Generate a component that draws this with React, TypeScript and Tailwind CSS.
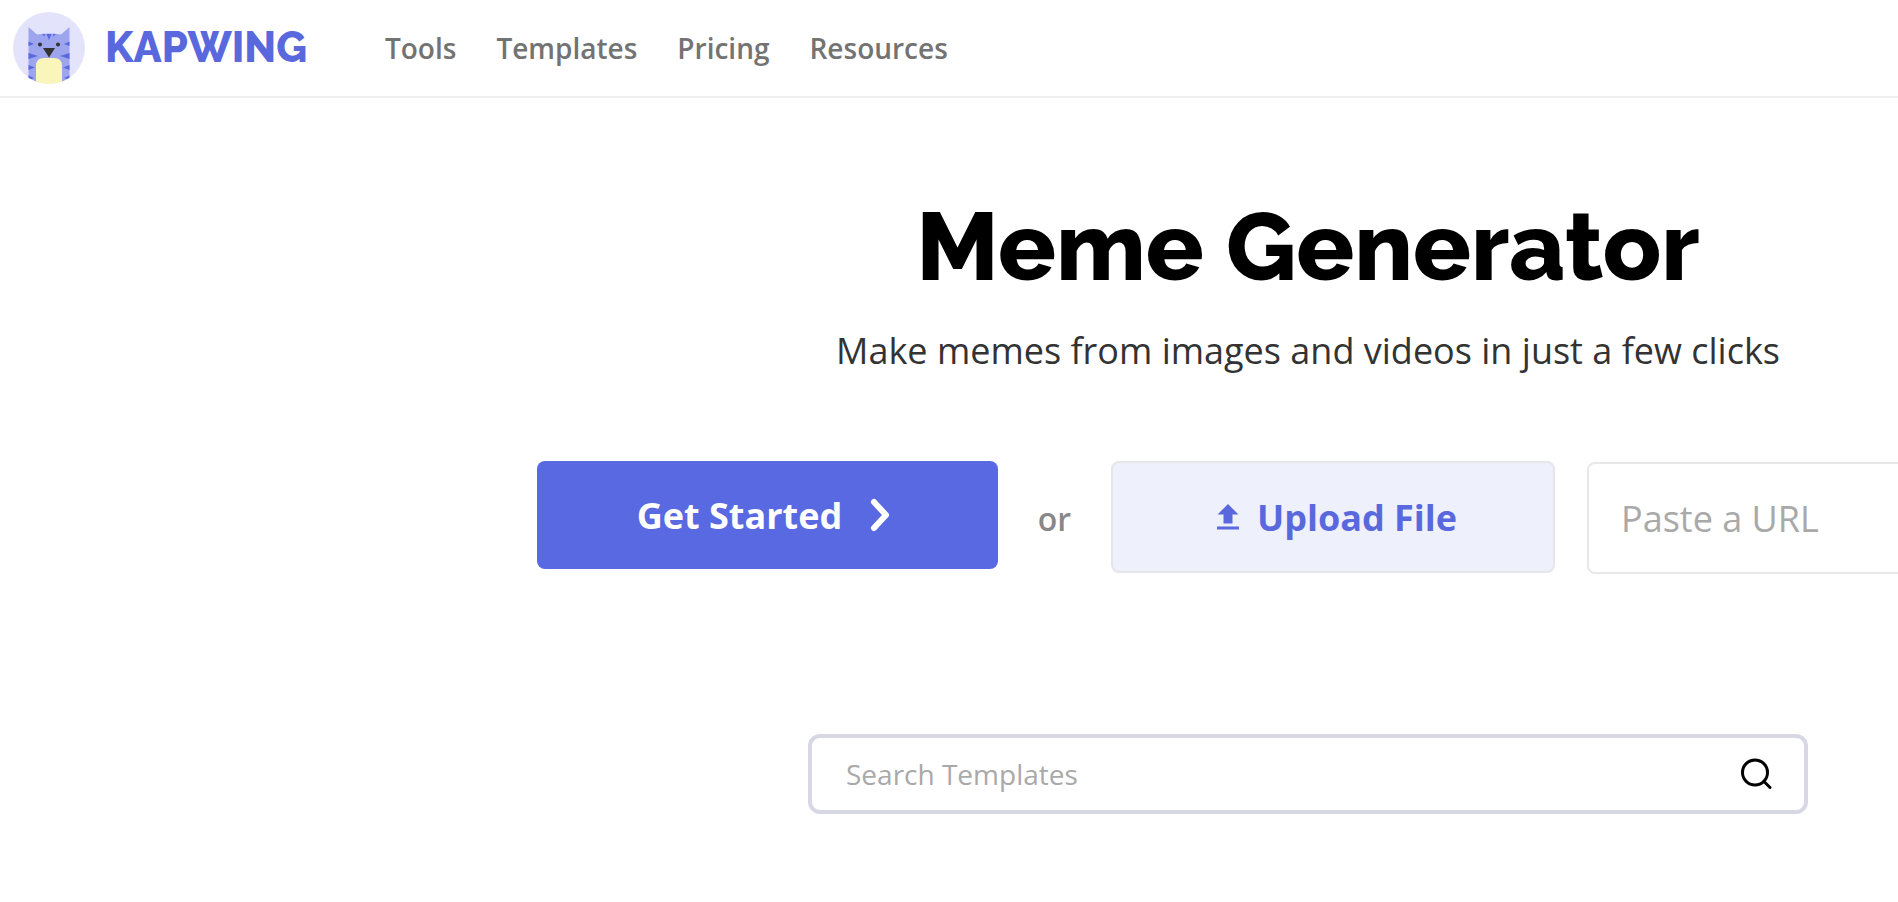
import { useState } from "react";

const navLinks = ["Tools", "Templates", "Pricing", "Resources"];

const CatLogo = () => {
  return (
    <svg className="w-[72px] h-[72px] shrink-0" viewBox="13 12 72 72" aria-hidden="true">
      <defs>
        <clipPath id="badge">
          <circle cx="49" cy="48" r="36" />
        </clipPath>
      </defs>
      <g clipPath="url(#badge)">
        <rect x="13" y="12" width="72" height="72" fill="#e3e4fb" />
        {/* body and ears */}
        <path d="M28.5 27 L37 34.5 Q49 32.5 61 34.5 L69.5 27 V81.5 H28.5 Z" fill="#9ca5ee" />
        {/* stripes */}
        <g fill="#5b69df">
          <path d="M46.5 34 H51.5 L49 40 Z" />
          <path d="M42 34 H45 L44.5 36.5 Z" />
          <path d="M53 34 H56 L53.5 36.5 Z" />
          <path d="M28.5 41.5 L34 44 L28.5 46 Z" />
          <path d="M69.5 41.5 L64 44 L69.5 46 Z" />
          <path d="M28.5 53 L38 56 L28.5 59 Z" />
          <path d="M69.5 53 L60 56 L69.5 59 Z" />
          <path d="M28.5 65 L35 67.5 L28.5 70 Z" />
          <path d="M69.5 65 L63 67.5 L69.5 70 Z" />
          <path d="M28.5 75.5 L34 78 L28.5 80 Z" />
          <path d="M69.5 75.5 L64 78 L69.5 80 Z" />
        </g>
        <path d="M36 84 V66 Q36 58 44 58 H54 Q62 58 62 66 V84 Z" fill="#f9f5bb" />
        <circle cx="40" cy="44.5" r="2" fill="#333" />
        <circle cx="58" cy="44.5" r="2" fill="#333" />
        <path d="M43 48 H55 L49 57.5 Z" fill="#333" />
      </g>
    </svg>
  );
};

const Header = () => {
  return (
    <header className="flex items-center h-[98px] pl-[13px] border-b-2 border-[#efefef]">
      <a href="#" className="flex items-center gap-5">
        <CatLogo />
        <span className="font-['Raleway','Lato',sans-serif] font-extrabold text-[42px] leading-[44px] text-[#5a68de]">KAPWING</span>
      </a>
      <nav className="flex items-center gap-10 ml-[78px]">
        {navLinks.map((link) => (
          <a key={link} href="#" className="text-[28px] font-semibold text-[#737373]">
            {link}
          </a>
        ))}
      </nav>
    </header>
  );
};

const App = () => {
  const [url, setUrl] = useState("");
  const [search, setSearch] = useState("");

  return (
    <div className="min-h-screen overflow-hidden bg-white font-['Open_Sans',sans-serif]">
      <Header />
      <main className="flex flex-col items-center min-w-[2616px] pt-[88px]">
        <h1 className="font-['Raleway','Lato',sans-serif] text-[96px] leading-[120px] font-extrabold text-black">Meme Generator</h1>
        <p className="mt-5 text-4xl leading-[50px] text-[#333]">
          Make memes from images and videos in just a few clicks
        </p>

        <section className="flex items-start mt-[85px]">
          <button className="flex items-center justify-center gap-7 w-[461px] h-[108px] pr-2 pt-[2px] rounded-lg bg-[#5969e1] text-4xl font-bold text-white">
            Get Started
            <svg className="w-5 h-9" viewBox="0 0 20 36" fill="none" stroke="currentColor" strokeWidth="6" strokeLinecap="round" strokeLinejoin="round" aria-hidden="true">
              <path d="M4 4 L16 17 L4 30" />
            </svg>
          </button>
          <span className="w-[113px] text-center text-[32px] leading-[116px] font-semibold text-[#888]">or</span>
          <button className="flex items-center justify-center gap-[18px] w-[444px] h-28 pl-2 pt-[2px] rounded-lg border-2 border-[#e5e6ea] bg-[#eef0fc] text-4xl font-bold text-[#5a68de]">
            <svg className="w-[22px] h-7" viewBox="0 0 22 28" fill="currentColor" aria-hidden="true">
              <path d="M11 0 L21.5 10.5 H15.5 V19.5 H6.5 V10.5 H0.5 Z M0 22.5 H22 V25.5 H0 Z" />
            </svg>
            Upload File
          </button>
          <input
            type="text"
            aria-label="Paste a URL"
            placeholder="Paste a URL"
            value={url}
            onChange={(e) => setUrl(e.target.value)}
            className="w-[492px] h-28 mt-px ml-8 px-8 rounded-lg border-2 border-[#e8e8e8] text-4xl placeholder:text-[#a9a9a9]"
          />
        </section>

        <form className="flex items-center w-[1000px] h-20 mt-[157px] pl-[34px] pr-8 rounded-xl border-4 border-[#d7d8e3]" onSubmit={(e) => e.preventDefault()}>
          <input
            type="text"
            aria-label="Search Templates"
            placeholder="Search Templates"
            value={search}
            onChange={(e) => setSearch(e.target.value)}
            className="grow text-[28px] outline-none placeholder:text-[#a9a9a9]"
          />
          <button type="submit" aria-label="Search">
            <svg className="w-8 h-8" viewBox="0 0 32 32" fill="none" stroke="#000" strokeWidth="3" strokeLinecap="round" aria-hidden="true">
              <circle cx="15" cy="14.5" r="12.5" />
              <path d="M24 23.5 L30 29.5" />
            </svg>
          </button>
        </form>
      </main>
    </div>
  );
};

export default App;
